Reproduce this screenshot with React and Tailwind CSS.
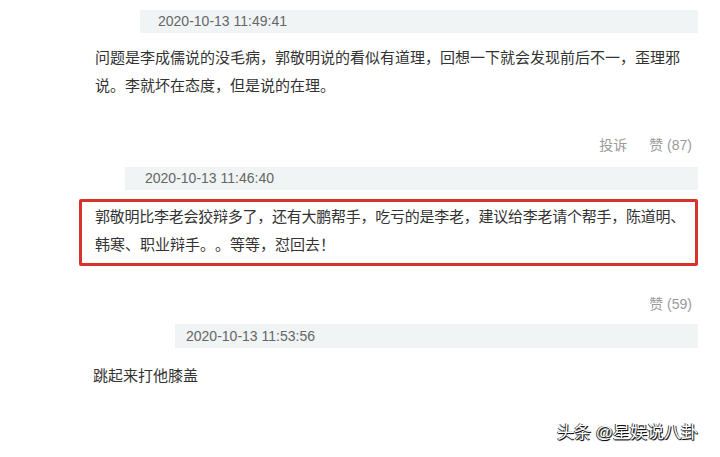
import React from 'react';

const font = { fontFamily: '"Liberation Sans", "Noto Sans CJK SC", sans-serif' };

function Header({ time, className }) {
    return (
        <div className={`h-[23px] mr-[22px] bg-[#f0f4f4] flex items-center text-[14px] text-[#666] ${className}`}>
            {time}
        </div>
    );
}

export default function App() {
    return (
        <div className="w-[720px] h-[457px] bg-white relative overflow-hidden text-[#333] flex flex-col [text-spacing-trim:space-all]" style={font}>
            <Header time="2020-10-13 11:49:41" className="mt-[10px] ml-[140px] pl-[18px]" />
            <div className="mt-[11px] pl-[95px] text-[15px] leading-[28px] whitespace-nowrap">
                <div>问题是李成儒说的没毛病，郭敬明说的看似有道理，回想一下就会发现前后不一，歪理邪</div>
                <div>说。李就坏在态度，但是说的在理。</div>
            </div>
            <div className="mt-[31px] flex justify-end gap-[22px] pr-[28px] text-[14px] leading-[28px] text-[#9a9a9a]">
                <span>投诉</span>
                <span>赞 (87)</span>
            </div>

            <Header time="2020-10-13 11:46:40" className="mt-[8px] ml-[125px] pl-[20px] h-[22px]" />
            <div className="mt-[9px] ml-[79px] w-[619px] border-[3px] border-[#d8322e] rounded-[2px] pt-[1px] pb-[4px] pl-[13px] text-[15px] leading-[28px] whitespace-nowrap">
                <div className="tracking-[-0.25px]">郭敬明比李老会狡辩多了，还有大鹏帮手，吃亏的是李老，建议给李老请个帮手，陈道明、</div>
                <div>韩寒、职业辩手。。等等，怼回去！</div>
            </div>
            <div className="mt-[24px] flex justify-end pr-[28px] text-[14px] leading-[28px] text-[#9a9a9a]">
                <span>赞 (59)</span>
            </div>

            <Header time="2020-10-13 11:53:56" className="mt-[6px] ml-[175px] pl-[11px] h-[24px]" />
            <div className="mt-[14px] pl-[93px] text-[15px] leading-[28px]">
                跳起来打他膝盖
            </div>

            <div
                className="absolute left-[557px] top-[422px] text-[17px] leading-[22px] text-white whitespace-nowrap"
                style={{ textShadow: '1px 1px 0 #111, -1px 0 0 #444, 0 1px 1px #111' }}
            >
                头条 @星娱说八卦
            </div>
        </div>
    );
}
